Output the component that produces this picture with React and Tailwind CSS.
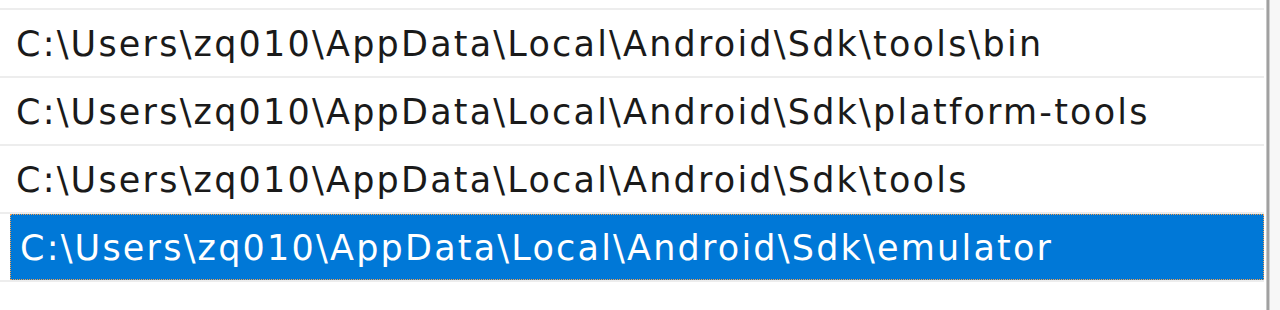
import React from 'react';

const paths = [
  'C:\\Users\\zq010\\AppData\\Local\\Android\\Sdk\\tools\\bin',
  'C:\\Users\\zq010\\AppData\\Local\\Android\\Sdk\\platform-tools',
  'C:\\Users\\zq010\\AppData\\Local\\Android\\Sdk\\tools',
  'C:\\Users\\zq010\\AppData\\Local\\Android\\Sdk\\emulator',
];

export default function App() {
  const selected = 3;
  return (
    <div className="flex w-[1280px] h-[310px] bg-white overflow-hidden" style={{ fontFamily: '"DejaVu Sans", "Noto Sans CJK SC", sans-serif' }}>
      <div className="w-[1264px] flex flex-col">
        <div className="h-[8px]" />
        <div className="h-[2px] bg-[#ededed]" />
        {paths.map((p, i) => (
          <div key={i} className="flex flex-col">
            <div className="h-[66px] flex">
              {i === selected ? (
                <div className="ml-[10px] flex-1 flex items-center bg-[#0078d7] border border-dotted border-[#f2a050] pl-[9px] pt-[2px] text-white text-[35px] tracking-[2.2px] leading-none whitespace-nowrap">
                  {p}
                </div>
              ) : (
                <div className="flex-1 flex items-center pl-[16px] pt-[2px] text-[#1a1a1a] text-[35px] tracking-[2.2px] leading-none whitespace-nowrap">
                  {p}
                </div>
              )}
            </div>
            <div className="h-[2px] bg-[#ededed]" />
          </div>
        ))}
      </div>
      <div className="w-[2px]" />
      <div className="w-[1px] bg-[#c8c8c8]" />
      <div className="w-[2px] bg-[#a0a0a0]" />
      <div className="w-[1px] bg-[#d0d0d0]" />
      <div className="flex-1 bg-[#f7f7f7]" />
    </div>
  );
}
